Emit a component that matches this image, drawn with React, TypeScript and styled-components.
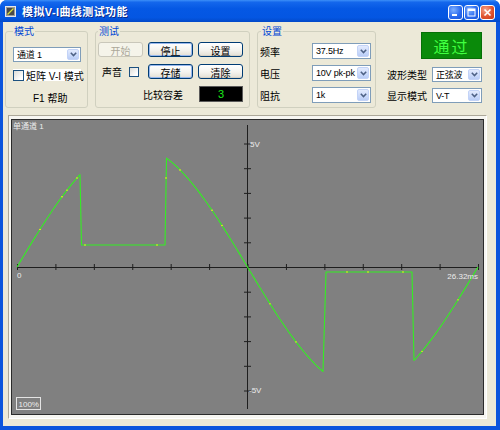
import React from 'react';
import styled, { createGlobalStyle } from 'styled-components';

const UI_FONT = `"Liberation Sans", "Noto Sans CJK SC", sans-serif`;
const XP_BLUE = '#0c55dd';

const GlobalStyle = createGlobalStyle`
  html, body { margin: 0; padding: 0; background: #fff; }
  body { font-family: ${UI_FONT}; font-size: 10px; color: #000; }
`;

const Window = styled.div`
  width: 500px;
  height: 430px;
  display: flex;
  flex-direction: column;
  border-radius: 7px 7px 0 0;
  overflow: hidden;
  background: ${XP_BLUE};
`;

const TitleBar = styled.div`
  height: 22px;
  flex: none;
  display: flex;
  align-items: center;
  padding: 0 5px;
  background: linear-gradient(to bottom, #3d90f8 0%, #1467ec 10%, #0558e4 40%, #0456e2 80%, #0349c8 100%);
`;

const Title = styled.span`
  margin-left: 6px;
  flex: 1;
  color: #fff;
  font-size: 11px;
  font-weight: bold;
  letter-spacing: 0.4px;
  text-shadow: 1px 1px 0 #0a2a8a;
`;

const CaptionButtons = styled.div`
  display: flex;
  gap: 1px;
  margin-top: 2px;
`;

const CapBtn = styled.div<{ $close?: boolean }>`
  width: 15px;
  height: 15px;
  box-sizing: border-box;
  border: 1px solid #fff;
  border-radius: 3px;
  display: flex;
  align-items: center;
  justify-content: center;
  background: ${p =>
    p.$close
      ? 'radial-gradient(circle at 35% 30%, #f4a58e 0%, #e0532f 55%, #c6391a 100%)'
      : 'radial-gradient(circle at 35% 30%, #7fb1ff 0%, #2d6cf0 55%, #1b55d6 100%)'};
`;

const Frame = styled.div`
  flex: 1;
  min-height: 0;
  display: flex;
  flex-direction: column;
  background: #ece9d8;
  border-left: 3px solid ${XP_BLUE};
  border-right: 4px solid ${XP_BLUE};
  border-bottom: 4px solid ${XP_BLUE};
  padding-top: 3px;
`;

const TopRow = styled.div`
  height: 83px;
  flex: none;
  display: flex;
  gap: 7px;
  padding-left: 2px;
`;

const Group = styled.fieldset<{ $w: number; $pad: number }>`
  width: ${p => p.$w}px;
  height: 83px;
  box-sizing: border-box;
  margin: 0;
  padding: 0 2px 0 ${p => p.$pad}px;
  min-width: 0;
  border: 1px solid #d0d0bf;
  border-radius: 3px;
`;

const Legend = styled.legend<{ $ml?: number }>`
  color: #0046d5;
  font-size: 10px;
  line-height: 13px;
  padding: 0 1px;
  margin-left: ${p => p.$ml ?? 0}px;
`;

const ModeBody = styled.div`
  display: flex;
  flex-direction: column;
  padding-top: 9px;
`;

const CheckRow = styled.label`
  margin-top: 7px;
  width: 68px;
  height: 12px;
  display: flex;
  align-items: center;
  gap: 2px;
  background: #fff;
  white-space: nowrap;
`;

const CheckBox = styled.span<{ $size: number }>`
  width: ${p => p.$size}px;
  height: ${p => p.$size}px;
  box-sizing: border-box;
  flex: none;
  border: 1px solid #1c5180;
  background: linear-gradient(135deg, #dcdcd7, #fff 80%);
`;

const HelpText = styled.div`
  margin-top: 11px;
  line-height: 13px;
  padding-left: 20px;
`;

const TestGrid = styled.div`
  display: grid;
  grid-template-columns: 45px 45px 45px;
  grid-template-rows: 15px 15px 16px;
  column-gap: 5px;
  row-gap: 7px;
  padding-top: 4px;
`;

const XPButton = styled.button<{ $focus?: boolean }>`
  padding: 0;
  font: 10px ${UI_FONT};
  color: #000;
  border: 1px solid #003c74;
  border-radius: 3px;
  background: linear-gradient(#ffffff, #f4f3ee 55%, #e2ded3);
  box-shadow: ${p => (p.$focus ? 'inset 0 0 0 1px #98b8ee' : 'inset 0 -1px 0 #d6d0c5')};
  &:disabled {
    color: #aca899;
    border-color: #c9c7ba;
    background: #f5f4ea;
    box-shadow: none;
  }
`;

const InlineField = styled.div`
  display: flex;
  align-items: center;
  gap: 7px;
  padding-left: 4px;
`;

const ToleranceLabel = styled.div`
  grid-column: 1 / 3;
  justify-self: end;
  align-self: center;
  padding-right: 10px;
`;

const Led = styled.div`
  margin-left: 1px;
  background: #000;
  border: 1px solid #5a5a5a;
  color: #1aeb1a;
  font-size: 11px;
  display: flex;
  align-items: center;
  justify-content: center;
`;

const SetupGrid = styled.div`
  display: grid;
  grid-template-columns: 52px 59px;
  grid-template-rows: 16px 16px 16px;
  row-gap: 6px;
  padding-top: 5px;
  align-items: center;
`;

const RightPanel = styled.div`
  width: 99px;
  display: flex;
  flex-direction: column;
  padding: 7px 0 0 4px;
  box-sizing: border-box;
`;

const PassBox = styled.div`
  align-self: flex-end;
  width: 61px;
  height: 27px;
  box-sizing: border-box;
  background: #0a8a0a;
  border: 1px solid #067006;
  color: #40ff40;
  font-size: 16px;
  letter-spacing: 2px;
  display: flex;
  align-items: center;
  justify-content: center;
`;

const FieldRow = styled.div<{ $mt: number }>`
  margin-top: ${p => p.$mt}px;
  height: 15px;
  display: flex;
  align-items: center;
  justify-content: space-between;
`;

const ComboBox = styled.div<{ $w: number; $h?: number }>`
  width: ${p => p.$w}px;
  height: ${p => p.$h ?? 15}px;
  box-sizing: border-box;
  border: 1px solid #7f9db9;
  background: #fff;
  display: flex;
`;

const ComboText = styled.span`
  flex: 1;
  padding-left: 3px;
  display: flex;
  align-items: center;
  font-size: 9px;
  letter-spacing: -0.2px;
  white-space: nowrap;
  overflow: hidden;
`;

const ComboArrow = styled.span`
  width: 12px;
  margin: 1px;
  box-sizing: border-box;
  border: 1px solid #c3d3f7;
  border-radius: 2px;
  background: linear-gradient(#e3ebfe, #b9cdf7);
  display: flex;
  align-items: center;
  justify-content: center;
`;

const ChartFrame = styled.div`
  flex: 1;
  min-height: 0;
  margin: 7px 9px 7px 5px;
  padding: 3px 2px;
  display: flex;
  flex-direction: column;
  background: #f7f6f1;
  border: 1px solid;
  border-color: #aca899 #fff #fff #aca899;
`;

const Plot = styled.div`
  flex: 1;
  min-height: 0;
  border: 1px solid #2b2b2b;
  background: #808080;
  svg {
    display: block;
    width: 100%;
    height: 100%;
  }
`;

function Combo({ value, width, height }: { value: string; width: number; height?: number }) {
  return (
    <ComboBox $w={width} $h={height}>
      <ComboText>{value}</ComboText>
      <ComboArrow>
        <svg width="7" height="5" viewBox="0 0 7 5">
          <path d="M0.8 0.8 L3.5 3.6 L6.2 0.8" fill="none" stroke="#4d6185" strokeWidth="1.5" />
        </svg>
      </ComboArrow>
    </ComboBox>
  );
}

// waveform model: one sine period clipped by the DUT
const X0 = 17;
const Y0 = 267;
const PERIOD = 461;
const AMP = 122;
const sineY = (x: number) => Y0 - AMP * Math.sin((2 * Math.PI * (x - X0)) / PERIOD);

function sinePoints(a: number, b: number) {
  const pts: string[] = [];
  for (let x = a; x < b; x += 2) pts.push(`${x.toFixed(1)} ${sineY(x).toFixed(1)}`);
  pts.push(`${b} ${sineY(b).toFixed(1)}`);
  return pts;
}

const wavePath = [
  'M ' + sinePoints(17, 80).join(' L '),
  'L 81.5 245 L 165 245',
  'L ' + sinePoints(166.5, 323).join(' L '),
  'L 326 272 L 412 272',
  'L ' + sinePoints(414, 478).join(' L '),
].join(' ');

const yellowDots: [number, number][] = [
  [40, sineY(40)], [62, sineY(62)], [67, sineY(67)], [77, sineY(77)],
  [85, 245], [157, 245], [166, 178], [180, sineY(180)], [212, sineY(212)],
  [222, sineY(222)], [270, sineY(270)], [296, sineY(296)], [347, 272],
  [368, 272], [403, 272], [422, sineY(422)], [458, sineY(458)],
];

const TICK_X = Array.from({ length: 13 }, (_, i) => X0 + i * 38.42);
const TICK_Y = [-5, -4, -3, -2, -1, 1, 2, 3, 4, 5].map(k => Y0 - k * 24.7);

function Scope() {
  const label = { fill: '#ececec', fontSize: 8, fontFamily: UI_FONT };
  return (
    <svg viewBox="12 120 471 294" preserveAspectRatio="none">
      <g stroke="#1e1e1e" strokeWidth="1">
        <line x1={X0} y1={Y0 + 0.5} x2={478} y2={Y0 + 0.5} />
        <line x1={247.5} y1={125} x2={247.5} y2={409} />
        {TICK_X.map(x => (
          <line key={x} x1={x + 0.5} y1={Y0 - 3} x2={x + 0.5} y2={Y0 + 3} />
        ))}
        {TICK_Y.map(y => (
          <line key={y} x1={244} y1={y + 0.5} x2={251} y2={y + 0.5} />
        ))}
      </g>
      <path d={wavePath} fill="none" stroke="#33ee22" strokeWidth="1.1" strokeLinejoin="round" />
      {yellowDots.map(([x, y], i) => (
        <ellipse key={i} cx={x} cy={y} rx={1.1} ry={0.7} fill="#d8e820" />
      ))}
      <text x={13} y={129} style={label}>单通道 1</text>
      <text x={250} y={147} style={label}>5V</text>
      <text x={249} y={393} style={label}>-5V</text>
      <text x={17} y={278} style={label}>0</text>
      <text x={478} y={279} textAnchor="end" style={label}>26.32ms</text>
      <rect x={16.5} y={397.5} width={24} height={12} fill="none" stroke="#e4e4e4" />
      <text x={18.5} y={407} style={label}>100%</text>
    </svg>
  );
}

export default function App() {
  return (
    <>
      <GlobalStyle />
      <Window>
        <TitleBar>
          <svg width="11" height="11" viewBox="0 0 11 11">
            <rect x="0.5" y="0.5" width="10" height="10" fill="#9a9a9a" stroke="#e8e8e8" />
            <rect x="2" y="2" width="7" height="7" fill="#4a4a4a" />
            <path d="M2.5 8.5 L8.5 2.5" stroke="#d8e040" strokeWidth="1.3" />
          </svg>
          <Title>模拟V-I曲线测试功能</Title>
          <CaptionButtons>
            <CapBtn>
              <svg width="9" height="9" viewBox="0 0 9 9">
                <rect x="1" y="6" width="5" height="2" fill="#fff" />
              </svg>
            </CapBtn>
            <CapBtn>
              <svg width="9" height="9" viewBox="0 0 9 9">
                <rect x="1" y="1" width="7" height="7" fill="none" stroke="#fff" />
                <rect x="1" y="1" width="7" height="2" fill="#fff" />
              </svg>
            </CapBtn>
            <CapBtn $close>
              <svg width="9" height="9" viewBox="0 0 9 9">
                <path d="M1.5 1.5 L7.5 7.5 M7.5 1.5 L1.5 7.5" stroke="#fff" strokeWidth="1.6" />
              </svg>
            </CapBtn>
          </CaptionButtons>
        </TitleBar>

        <Frame>
          <TopRow>
            <Group $w={83} $pad={7}>
              <Legend>模式</Legend>
              <ModeBody>
                <Combo value="通道 1" width={68} />
                <CheckRow>
                  <CheckBox $size={11} />
                  矩阵 V-I 模式
                </CheckRow>
                <HelpText>F1 帮助</HelpText>
              </ModeBody>
            </Group>

            <Group $w={155} $pad={2}>
              <Legend>测试</Legend>
              <TestGrid>
                <XPButton disabled>开始</XPButton>
                <XPButton $focus>停止</XPButton>
                <XPButton>设置</XPButton>
                <InlineField>
                  声音
                  <CheckBox $size={10} />
                </InlineField>
                <XPButton $focus>存储</XPButton>
                <XPButton>清除</XPButton>
                <ToleranceLabel>比较容差</ToleranceLabel>
                <Led>3</Led>
              </TestGrid>
            </Group>

            <Group $w={119} $pad={2}>
              <Legend $ml={1}>设置</Legend>
              <SetupGrid>
                <span>频率</span>
                <Combo value="37.5Hz" width={59} height={16} />
                <span>电压</span>
                <Combo value="10V pk-pk" width={59} height={16} />
                <span>阻抗</span>
                <Combo value="1k" width={59} height={16} />
              </SetupGrid>
            </Group>

            <RightPanel>
              <PassBox>通过</PassBox>
              <FieldRow $mt={8}>
                <span>波形类型</span>
                <Combo value="正弦波" width={50} />
              </FieldRow>
              <FieldRow $mt={6}>
                <span>显示模式</span>
                <Combo value="V-T" width={50} />
              </FieldRow>
            </RightPanel>
          </TopRow>

          <ChartFrame>
            <Plot>
              <Scope />
            </Plot>
          </ChartFrame>
        </Frame>
      </Window>
    </>
  );
}
